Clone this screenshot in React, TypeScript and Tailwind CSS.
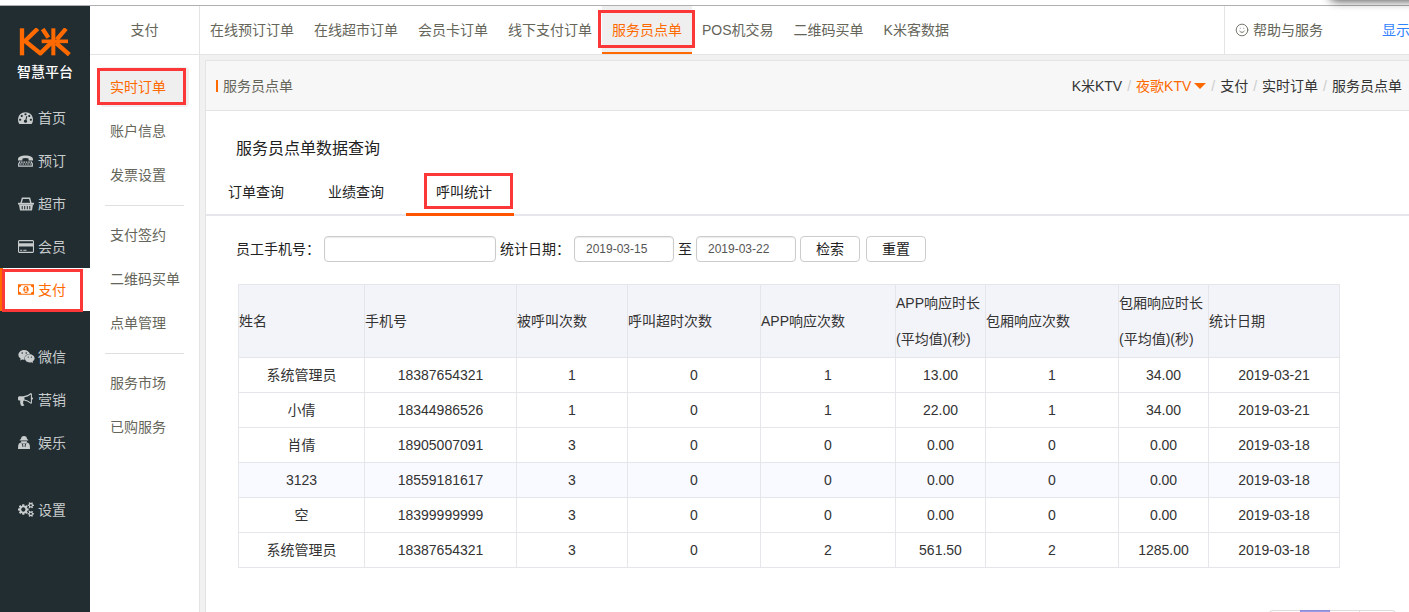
import React, { useState } from 'react';
import { FaWeixin } from 'react-icons/fa';
import { Smile } from 'lucide-react';

type MenuItem = { label: string; icon: React.ReactNode };

type CallRow = {
  name: string;
  phone: string;
  called: number;
  timeout: number;
  appCount: number;
  appTime: string;
  roomCount: number;
  roomTime: string;
  date: string;
};

const DashboardIcon = () => (
  <svg viewBox="0 0 1792 1792" className="size-[15px]" fill="currentColor">
    <path d="M384 1152q0-53-37.5-90.5t-90.5-37.5-90.5 37.5-37.5 90.5 37.5 90.5 90.5 37.5 90.5-37.5 37.5-90.5zm192-448q0-53-37.5-90.5t-90.5-37.5-90.5 37.5-37.5 90.5 37.5 90.5 90.5 37.5 90.5-37.5 37.5-90.5zm428 481l101-382q6-26-7.5-48.5t-38.5-29.5-48 6.5-30 39.5l-101 382q-60 5-107 43.5t-63 98.5q-20 77 20 146t117 89 146-20 89-117q16-60-6-117t-72-91zm660-33q0-53-37.5-90.5t-90.5-37.5-90.5 37.5-37.5 90.5 37.5 90.5 90.5 37.5 90.5-37.5 37.5-90.5zm-640-640q0-53-37.5-90.5t-90.5-37.5-90.5 37.5-37.5 90.5 37.5 90.5 90.5 37.5 90.5-37.5 37.5-90.5zm448 192q0-53-37.5-90.5t-90.5-37.5-90.5 37.5-37.5 90.5 37.5 90.5 90.5 37.5 90.5-37.5 37.5-90.5zm320 448q0 261-141 483-19 29-54 29h-1402q-35 0-54-29-141-221-141-483 0-182 71-348t191-286 286-191 348-71 348 71 286 191 191 286 71 348z" />
  </svg>
);

const PhoneIcon = () => (
  <svg viewBox="0 0 15 12" className="h-3 w-[15px]" fill="none" stroke="currentColor">
    <path d="M0 4.2C0 1.6 3.4.4 7.5.4S15 1.6 15 4.2V5.4H10.6V3.6Q7.5 2.6 4.4 3.6V5.4H0Z" fill="currentColor" stroke="none" />
    <path d="M3 7.2H12.2M2 9H13.2" strokeWidth="1.2" strokeDasharray="1.6 .8" />
    <path d="M2.2 6.4L.7 8.6V11.2H14.3V8.6L12.8 6.4" strokeWidth="1.2" />
  </svg>
);

const BasketIcon = () => (
  <svg viewBox="0 0 16 14" className="h-3.5 w-4" fill="none" stroke="currentColor">
    <path d="M3 6.4L4.4 1.2H11.6L13 6.4" strokeWidth="1.4" />
    <path d="M0 5.8H16V7.6H0Z" fill="currentColor" stroke="none" />
    <path fillRule="evenodd" d="M1 7.4H15L14 13.6H2ZM3.7 9V12.2H4.7V9ZM6.2 9V12.2H7.2V9ZM8.8 9V12.2H9.8V9ZM11.3 9V12.2H12.3V9Z" fill="currentColor" stroke="none" />
  </svg>
);

const CardIcon = () => (
  <svg viewBox="0 0 1920 1792" className="h-[15px] w-4" fill="currentColor">
    <path d="M1760 128q66 0 113 47t47 113v1216q0 66-47 113t-113 47h-1600q-66 0-113-47t-47-113v-1216q0-66 47-113t113-47h1600zm-1600 128q-13 0-22.5 9.5t-9.5 22.5v224h1664v-224q0-13-9.5-22.5t-22.5-9.5h-1600zm1600 1280q13 0 22.5-9.5t9.5-22.5v-608h-1664v608q0 13 9.5 22.5t22.5 9.5h1600zm-1504-128v-128h256v128h-256zm384 0v-128h384v128h-384z" />
  </svg>
);

const MoneyIcon = () => (
  <svg viewBox="0 0 1920 1792" className="h-[15px] w-4" fill="currentColor">
    <path d="M768 1152h384v-96h-128v-448h-114l-148 137 77 80q42-37 55-57h2v288h-128v96zm512-256q0 70-21 142t-59.5 134-101.5 101-138 39-138-39-101.5-101-59.5-134-21-142 21-142 59.5-134 101.5-101 138-39 138 39 101.5 101 59.5 134 21 142zm512 256v-512q-106 0-181-75t-75-181h-1152q0 106-75 181t-181 75v512q106 0 181 75t75 181h1152q0-106 75-181t181-75zm128-832v1152q0 26-19 45t-45 19h-1792q-26 0-45-19t-19-45v-1152q0-26 19-45t45-19h1792q26 0 45 19t19 45z" />
  </svg>
);

const BullhornIcon = () => (
  <svg viewBox="0 0 1792 1792" className="size-[15px]" fill="currentColor">
    <path d="M1664 640q53 0 90.5 37.5t37.5 90.5-37.5 90.5-90.5 37.5v384q0 52-38 90t-90 38q-417-347-812-380-58 19-91 66t-31 100.5 40 92.5q-20 33-23 65.5t6 58 33.5 55 48 50 61.5 50.5q-29 58-111.5 83t-168.5 11.5-132-55.5q-7-23-29.5-87.5t-32-94.5-23-89-15-101 3.5-98.5 22-110.5h-122q-66 0-113-47t-47-113v-192q0-66 47-113t113-47h480q435 0 896-384 52 0 90 38t38 90v384zm-128 604v-954q-394 302-768 343v270q377 42 768 341z" />
  </svg>
);

const PersonIcon = () => (
  <svg viewBox="0 0 12 13" className="h-[13px] w-3" fill="currentColor">
    <path d="M3 3C3 .9 4.2 0 6 0S9 .9 9 3L10.2 3.8V4.6H1.8V3.8Z" />
    <path d="M3 5.2H9V6.2Q8.6 7 8 7.2H4Q3.4 7 3 6.2Z" />
    <path fillRule="evenodd" d="M2.8 6.6Q.4 7.2.2 9.6L0 13H12L11.8 9.6Q11.6 7.2 9.2 6.6L8.4 7.4H3.6ZM4 8H5L5.4 11H4.6ZM8 8H7L6.6 11H7.4Z" />
  </svg>
);

const CogsIcon = () => (
  <svg viewBox="0 0 1920 1792" className="h-[15px] w-4" fill="currentColor">
    <path d="M896 896q0-106-75-181t-181-75-181 75-75 181 75 181 181 75 181-75 75-181zm768 512q0-52-38-90t-90-38-90 38-38 90q0 53 37.5 90.5t90.5 37.5 90.5-37.5 37.5-90.5zm0-1024q0-52-38-90t-90-38-90 38-38 90q0 53 37.5 90.5t90.5 37.5 90.5-37.5 37.5-90.5zm-384 421v185q0 10-7 19.5t-16 10.5l-155 24q-11 35-32 76 34 48 90 115 7 11 7 20 0 12-7 19-23 30-82.5 89.5t-78.5 59.5q-11 0-21-7l-115-90q-37 19-77 31-11 108-23 155-7 24-30 24h-186q-11 0-20-7.5t-10-17.5l-23-153q-34-10-75-31l-118 89q-7 7-20 7-11 0-21-8-144-133-144-160 0-9 7-19 10-14 41-53t47-61q-23-44-35-82l-152-24q-10-1-17-9.5t-7-19.5v-185q0-10 7-19.5t16-10.5l155-24q11-35 32-76-34-48-90-115-7-11-7-20 0-12 7-20 22-30 82-89t79-59q11 0 21 7l115 90q34-18 77-32 11-108 23-154 7-24 30-24h186q11 0 20 7.5t10 17.5l23 153q34 10 75 31l118-89q8-7 20-7 11 0 21 8 144 133 144 160 0 8-7 19-12 16-42 54t-45 60q23 48 34 82l152 23q10 2 17 10.5t7 19.5zm640 533v140q0 16-149 31-12 27-30 52 51 113 51 138 0 4-4 7-122 71-124 71-8 0-46-47t-52-68q-20 2-30 2t-30-2q-14 21-52 68t-46 47q-2 0-124-71-4-3-4-7 0-25 51-138-18-25-30-52-149-15-149-31v-140q0-16 149-31 13-29 30-52-51-113-51-138 0-4 4-7 4-2 35-20t59-34 30-16q8 0 46 46.5t52 67.5q20-2 30-2t30 2q51-71 92-112l6-2q4 0 124 70 4 3 4 7 0 25-51 138 17 23 30 52 149 15 149 31zm0-1024v140q0 16-149 31-12 27-30 52 51 113 51 138 0 4-4 7-122 71-124 71-8 0-46-47t-52-68q-20 2-30 2t-30-2q-14 21-52 68t-46 47q-2 0-124-71-4-3-4-7 0-25 51-138-18-25-30-52-149-15-149-31v-140q0-16 149-31 13-29 30-52-51-113-51-138 0-4 4-7 4-2 35-20t59-34 30-16q8 0 46 46.5t52 67.5q20-2 30-2t30 2q51-71 92-112l6-2q4 0 124 70 4 3 4 7 0 25-51 138 17 23 30 52 149 15 149 31z" />
  </svg>
);

// main menu, grouped as in the sidebar
const menuGroups: MenuItem[][] = [
  [
    { label: '首页', icon: <DashboardIcon /> },
    { label: '预订', icon: <PhoneIcon /> },
    { label: '超市', icon: <BasketIcon /> },
    { label: '会员', icon: <CardIcon /> },
    { label: '支付', icon: <MoneyIcon /> },
  ],
  [
    { label: '微信', icon: <FaWeixin size={17} /> },
    { label: '营销', icon: <BullhornIcon /> },
    { label: '娱乐', icon: <PersonIcon /> },
  ],
  [{ label: '设置', icon: <CogsIcon /> }],
];

const subMenuGroups = [
  ['实时订单', '账户信息', '发票设置'],
  ['支付签约', '二维码买单', '点单管理'],
  ['服务市场', '已购服务'],
];

const topTabs = ['在线预订订单', '在线超市订单', '会员卡订单', '线下支付订单', '服务员点单', 'POS机交易', '二维码买单', 'K米客数据'];

const rows: CallRow[] = [
  { name: '系统管理员', phone: '18387654321', called: 1, timeout: 0, appCount: 1, appTime: '13.00', roomCount: 1, roomTime: '34.00', date: '2019-03-21' },
  { name: '小倩', phone: '18344986526', called: 1, timeout: 0, appCount: 1, appTime: '22.00', roomCount: 1, roomTime: '34.00', date: '2019-03-21' },
  { name: '肖倩', phone: '18905007091', called: 3, timeout: 0, appCount: 0, appTime: '0.00', roomCount: 0, roomTime: '0.00', date: '2019-03-18' },
  { name: '3123', phone: '18559181617', called: 3, timeout: 0, appCount: 0, appTime: '0.00', roomCount: 0, roomTime: '0.00', date: '2019-03-18' },
  { name: '空', phone: '18399999999', called: 3, timeout: 0, appCount: 0, appTime: '0.00', roomCount: 0, roomTime: '0.00', date: '2019-03-18' },
  { name: '系统管理员', phone: '18387654321', called: 3, timeout: 0, appCount: 2, appTime: '561.50', roomCount: 2, roomTime: '1285.00', date: '2019-03-18' },
];

const Logo = () => (
  <div className="flex h-[90px] flex-col items-center pt-[22px]">
    <svg viewBox="0 0 156 84" className="h-7 w-[52px]" fill="none" stroke="#ff6a00" strokeWidth="13">
      <path d="M9 1V82" />
      <path d="M56 2L18 39L64 76L97 44" strokeLinejoin="round" />
      <path d="M68 40H147" strokeWidth="11" />
      <path d="M103 1V82" strokeWidth="12" />
      <path d="M71 3L88 29M141 2L113 35M111 45L151 80" />
    </svg>
    <p className="mt-1 text-sm leading-6 font-medium whitespace-nowrap text-white">智慧平台</p>
  </div>
);

// red marker frame drawn over the current item
const Marker = ({ className }: { className: string }) => <span className={`pointer-events-none absolute z-10 border-3 border-[#fb3737] ${className}`} />;

const Sidebar = () => {
  return (
    <aside className="w-[90px] shrink-0 bg-[#222d32]">
      <Logo />
      <nav className="flex flex-col gap-6">
        {menuGroups.map((group, index) => (
          <ul key={index}>
            {group.map((item) => {
              const active = item.label === '支付';
              return (
                <li key={item.label} className="relative">
                  <a href="#" className={`flex h-[43px] items-center border-l-3 pl-[15px] ${active ? 'border-[#ff6a00] bg-white text-[#ff6a00]' : 'border-transparent text-[#c8cccd]'}`}>
                    <span className="flex w-5 shrink-0">{item.icon}</span>
                    {item.label}
                  </a>
                  {active && <Marker className="top-px left-0.5 h-[43px] w-[81px]" />}
                </li>
              );
            })}
          </ul>
        ))}
      </nav>
    </aside>
  );
};

const SubMenu = () => {
  return (
    <div className="w-[110px] shrink-0 border-r border-[#e4e4e4] bg-white">
      <div className="flex h-[49px] items-center justify-center border-b border-[#e4e4e4]">支付</div>
      <nav className="px-[10px] pt-3">
        {subMenuGroups.map((group, index) => (
          <div key={index}>
            {index > 0 && <hr className="mx-[5px] mt-[10px] mb-[9px] border-[#e0e0e0]" />}
            <ul className="flex flex-col gap-1">
              {group.map((label) => {
                const active = label === '实时订单';
                return (
                  <li key={label} className="relative">
                    <a href="#" className={`flex h-10 items-center rounded-sm pl-[10px] whitespace-nowrap ${active ? 'bg-[#efefef] text-[#ff6a00]' : ''}`}>
                      {label}
                    </a>
                    {active && <Marker className="top-px -left-[3px] h-[37px] w-[89px]" />}
                  </li>
                );
              })}
            </ul>
          </div>
        ))}
      </nav>
    </div>
  );
};

const TopBar = () => {
  return (
    <header className="flex h-[49px] shrink-0 border-b border-[#e4e4e4] bg-white">
      <nav className="flex flex-1">
        {topTabs.map((label) => {
          const active = label === '服务员点单';
          return (
            <a key={label} href="#" className={`relative flex items-center border-b-2 px-[10px] pt-0.5 whitespace-nowrap ${active ? 'border-[#ff6a00] bg-[#efefef] text-[#ff6a00]' : 'border-transparent'}`}>
              {label}
              {active && <Marker className="top-1 -left-1 h-[38px] w-[97px]" />}
            </a>
          );
        })}
      </nav>
      <div className="flex w-[185px] shrink-0 items-center overflow-hidden border-l border-[#e4e4e4] pl-[10px] whitespace-nowrap">
        <a href="#" className="flex items-center gap-1">
          <Smile size={14} strokeWidth={1.5} />
          帮助与服务
        </a>
        <a href="#" className="ml-[59px] text-[#2f82ff]">
          显示
        </a>
      </div>
    </header>
  );
};

const Breadcrumb = () => (
  <ol className="flex items-center text-[#333]">
    <li>K米KTV</li>
    <li className="px-[5px] text-[#ccc]">/</li>
    <li>
      <button className="flex items-center gap-[3px] text-[#ff6a00]">
        夜歌KTV
        <svg viewBox="0 0 12 6" className="h-1.5 w-3" fill="currentColor">
          <path d="M0 0H12L6 6Z" />
        </svg>
      </button>
    </li>
    <li className="px-[5px] text-[#ccc]">/</li>
    <li>支付</li>
    <li className="px-[5px] text-[#ccc]">/</li>
    <li>实时订单</li>
    <li className="px-[5px] text-[#ccc]">/</li>
    <li>服务员点单</li>
  </ol>
);

const SearchForm = () => {
  const [phone, setPhone] = useState('');
  const [startDate, setStartDate] = useState('2019-03-15');
  const [endDate, setEndDate] = useState('2019-03-22');

  const handleReset = () => {
    setPhone('');
    setStartDate('2019-03-15');
    setEndDate('2019-03-22');
  };

  return (
    <form className="flex items-center gap-1 pt-5 pl-[30px]" onSubmit={(e) => e.preventDefault()}>
      <label htmlFor="phone">员工手机号：</label>
      <input id="phone" className="h-[26px] w-[172px] rounded border border-[#ccc] px-3 text-xs text-[#555] shadow-[inset_0_1px_1px_rgba(0,0,0,0.08)]" value={phone} onChange={(e) => setPhone(e.target.value)} />
      <label htmlFor="start">统计日期：</label>
      <input id="start" className="h-[26px] w-[100px] rounded border border-[#ccc] px-[11px] text-xs text-[#555] shadow-[inset_0_1px_1px_rgba(0,0,0,0.08)]" value={startDate} onChange={(e) => setStartDate(e.target.value)} />
      <label htmlFor="end">至</label>
      <input id="end" className="h-[26px] w-[100px] rounded border border-[#ccc] px-[11px] text-xs text-[#555] shadow-[inset_0_1px_1px_rgba(0,0,0,0.08)]" value={endDate} onChange={(e) => setEndDate(e.target.value)} />
      <button type="submit" className="h-[26px] w-[60px] rounded border border-[#ccc] bg-white text-[#222]">
        检索
      </button>
      <button type="button" className="ml-0.5 h-[26px] w-[60px] rounded border border-[#ccc] bg-white text-[#222]" onClick={handleReset}>
        重置
      </button>
    </form>
  );
};

const CallTable = () => {
  const th = 'border border-[#e4e6e9] p-0 text-left leading-9 font-normal';
  const td = 'border border-[#e4e6e9] p-0';
  return (
    <table className="w-full table-fixed border-collapse text-center text-[#333]">
      <colgroup>
        <col className="w-[126px]" />
        <col className="w-[152px]" />
        <col className="w-[111px]" />
        <col className="w-[133px]" />
        <col className="w-[135px]" />
        <col className="w-[90px]" />
        <col className="w-[133px]" />
        <col className="w-[90px]" />
        <col className="w-[131px]" />
      </colgroup>
      <thead className="bg-[#f3f4f9]">
        <tr>
          <th className={th}>姓名</th>
          <th className={th}>手机号</th>
          <th className={th}>被呼叫次数</th>
          <th className={th}>呼叫超时次数</th>
          <th className={th}>APP响应次数</th>
          <th className={th}>
            <span className="whitespace-nowrap">APP响应时长</span>
            <br />
            (平均值)(秒)
          </th>
          <th className={th}>包厢响应次数</th>
          <th className={th}>
            包厢响应时长
            <br />
            (平均值)(秒)
          </th>
          <th className={th}>统计日期</th>
        </tr>
      </thead>
      <tbody>
        {rows.map((row, index) => (
          <tr key={index} className={`h-[35px] ${index === 3 ? 'bg-[#f9faff]' : ''}`}>
            <td className={td}>{row.name}</td>
            <td className={td}>{row.phone}</td>
            <td className={td}>{row.called}</td>
            <td className={td}>{row.timeout}</td>
            <td className={td}>{row.appCount}</td>
            <td className={td}>{row.appTime}</td>
            <td className={td}>{row.roomCount}</td>
            <td className={td}>{row.roomTime}</td>
            <td className={td}>{row.date}</td>
          </tr>
        ))}
      </tbody>
    </table>
  );
};

const Pagination = () => (
  <nav className="mt-[42px] flex justify-end pr-[13px]">
    <button aria-label="上一页" className="h-[30px] w-[31px] rounded-l border border-r-0 border-[#ddd]" />
    <button aria-label="当前页" className="h-[30px] w-[30px] border border-[#8c8cd9] bg-[#9c9ce6]" />
    <button aria-label="下一页" className="h-[30px] w-[30px] border border-l-0 border-[#ddd]" />
    <button aria-label="末页" className="h-[30px] w-9 rounded-r border border-l-0 border-[#ddd]" />
  </nav>
);

const Content = () => {
  const [tab, setTab] = useState('呼叫统计');
  return (
    <section className="mt-[5px] ml-[5px] flex-1 border-t border-l border-[#e4e4e4] bg-white">
      <div className="flex h-[50px] items-center justify-between border-b border-[#e4e4e4] bg-[#f7f7f7] pr-[7px] pl-[10px]">
        <h1 className="flex items-center gap-[5px]">
          <span className="h-3 w-0.5 bg-[#ff6a00]" />
          服务员点单
        </h1>
        <Breadcrumb />
      </div>

      <div className="text-[#222]">
        <h2 className="pt-[26px] pl-[30px] text-base leading-6">服务员点单数据查询</h2>
        <div className="mt-2 flex h-[47px] border-b-2 border-[#e6e6ec]">
          {['订单查询', '业绩查询'].map((label) => (
            <button key={label} className="w-[100px]" onClick={() => setTab(label)}>
              {label}
            </button>
          ))}
          <button className="relative w-[108px] pr-[22px] pl-[30px]" onClick={() => setTab('呼叫统计')}>
            呼叫统计
            {tab === '呼叫统计' && (
              <>
                <Marker className="top-1 right-px h-9 w-[89px]" />
                <span className="absolute inset-x-0 -bottom-0.5 h-[3px] bg-[#ff5500]" />
              </>
            )}
          </button>
        </div>

        <SearchForm />
        <div className="pt-[22px] pr-[69px] pl-8">
          <CallTable />
        </div>
        <Pagination />
      </div>
    </section>
  );
};

const App = () => {
  return (
    <div className="relative flex h-screen flex-col overflow-hidden bg-white font-['Liberation_Sans','Noto_Sans_CJK_SC',sans-serif] text-sm text-[#65655a]">
      <div className="h-1.5 shrink-0 border-b border-[#b0b0b0]" />
      <div className="absolute -top-5 -right-5 z-20 h-5 w-[100px] rounded-lg bg-[#999] shadow-[0_1px_10px_rgba(0,0,0,0.7)]" />
      <div className="flex min-h-0 flex-1">
        <Sidebar />
        <SubMenu />
        <main className="flex min-w-0 flex-1 flex-col bg-[#f1f1f1]">
          <TopBar />
          <Content />
        </main>
      </div>
    </div>
  );
};

export default App;
